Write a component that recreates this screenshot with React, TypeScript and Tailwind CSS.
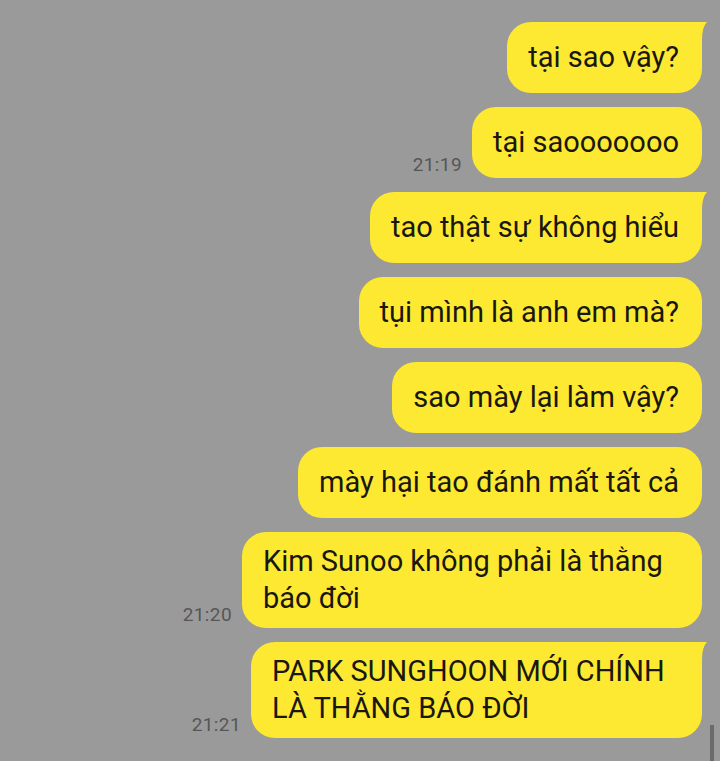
import React from "react";

// ─── Data ────────────────────────────────────────────────────────────────────

type Msg = {
  text: React.ReactNode;
  time?: string;
  tail?: boolean;
  width?: string;
};

const messages: Msg[] = [
  { text: "tại sao vậy?", tail: true },
  { text: "tại saooooooo", time: "21:19" },
  { text: "tao thật sự không hiểu", tail: true },
  { text: "tụi mình là anh em mà?" },
  { text: "sao mày lại làm vậy?" },
  { text: "mày hại tao đánh mất tất cả" },
  {
    text: (
      <>
        Kim Sunoo không phải là thằng
        <br />
        báo đời
      </>
    ),
    time: "21:20",
    width: "w-[460px]",
  },
  {
    text: (
      <>
        PARK SUNGHOON MỚI CHÍNH
        <br />
        LÀ THẰNG BÁO ĐỜI
      </>
    ),
    time: "21:21",
    tail: true,
    width: "w-[451px]",
  },
];

// ─── Bubble ──────────────────────────────────────────────────────────────────

const Bubble = ({ msg }: { msg: Msg }) => (
  <div className="flex items-end gap-[10px]">
    {msg.time && (
      <span className="mb-[2px] text-[19px] leading-[22px] tracking-[0.4px] text-[#565656]">
        {msg.time}
      </span>
    )}
    <div
      className={`relative flex min-h-[71px] items-center bg-[#fde932] py-[11px] pl-[21px] pr-[23px] text-[29px] leading-[37px] text-[#191710] ${
        msg.tail ? "rounded-[24px] rounded-tr-[0px]" : "rounded-[24px]"
      } ${msg.width ?? ""}`}
    >
      {msg.tail && (
        <svg
          className="absolute -right-[5px] top-0 block h-[24px] w-[30px] overflow-visible"
          viewBox="0 0 30 24"
        >
          <path d="M0 0 L30 0 Q25 5 25 18 L25 24 L0 24 Z" fill="#fde932" />
        </svg>
      )}
      <span className="relative">{msg.text}</span>
    </div>
  </div>
);

// ─── App ─────────────────────────────────────────────────────────────────────

export default function App() {
  return (
    <div
      className="relative h-[761px] w-[720px] overflow-hidden bg-[#9a9a9a]"
      style={{ fontFamily: "Roboto, 'Noto Sans', sans-serif" }}
    >
      <div className="flex flex-col items-end gap-[14px] pr-[18px] pt-[22px]">
        {messages.map((m, i) => (
          <Bubble key={i} msg={m} />
        ))}
      </div>

      {/* scrollbar thumb */}
      <div className="absolute bottom-0 right-[6px] h-[36px] w-[4px] bg-[#6a6a6a]" />
    </div>
  );
}
